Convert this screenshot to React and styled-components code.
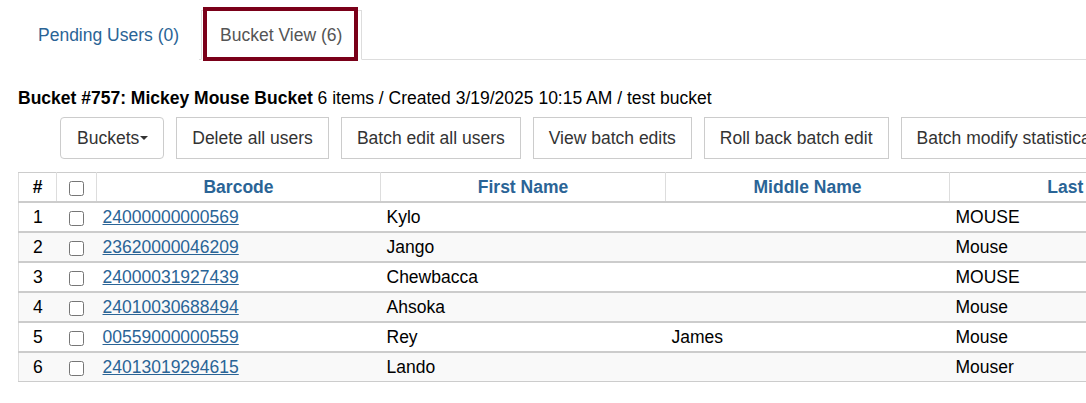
import React from "react";
import styled, { createGlobalStyle } from "styled-components";

const rows = [
  { n: 1, barcode: "24000000000569", first: "Kylo", middle: "", last: "MOUSE" },
  { n: 2, barcode: "23620000046209", first: "Jango", middle: "", last: "Mouse" },
  { n: 3, barcode: "24000031927439", first: "Chewbacca", middle: "", last: "MOUSE" },
  { n: 4, barcode: "24010030688494", first: "Ahsoka", middle: "", last: "Mouse" },
  { n: 5, barcode: "00559000000559", first: "Rey", middle: "James", last: "Mouse" },
  { n: 6, barcode: "24013019294615", first: "Lando", middle: "", last: "Mouser" },
];

const actions = [
  "Delete all users",
  "Batch edit all users",
  "View batch edits",
  "Roll back batch edit",
  "Batch modify statistical categories",
];

function App() {
  return (
    <>
      <GlobalStyle />
      <Page>
        <Tabs>
          <Tab>Pending Users (0)</Tab>
          <Tab $active>Bucket View (6)</Tab>
        </Tabs>

        <Heading>
          <strong>Bucket #757: Mickey Mouse Bucket</strong> 6 items / Created
          3/19/2025 10:15 AM / test bucket
        </Heading>

        <Toolbar>
          <DropdownButton>
            Buckets
            <Caret />
          </DropdownButton>
          {actions.map((label) => (
            <ActionButton key={label}>{label}</ActionButton>
          ))}
        </Toolbar>

        <Table>
          <colgroup>
            <col style={{ width: 38 }} />
            <col style={{ width: 40 }} />
            <col style={{ width: 284 }} />
            <col style={{ width: 285 }} />
            <col style={{ width: 284 }} />
            <col style={{ width: 284 }} />
          </colgroup>
          <thead>
            <tr>
              <HeadCell $plain>#</HeadCell>
              <HeadCell>
                <Check type="checkbox" />
              </HeadCell>
              <HeadCell>Barcode</HeadCell>
              <HeadCell>First Name</HeadCell>
              <HeadCell>Middle Name</HeadCell>
              <HeadCell>Last Name</HeadCell>
            </tr>
          </thead>
          <tbody>
            {rows.map((r) => (
              <Row key={r.n}>
                <Cell $center>{r.n}</Cell>
                <Cell $center>
                  <Check type="checkbox" />
                </Cell>
                <Cell>
                  <BarcodeLink href="#">{r.barcode}</BarcodeLink>
                </Cell>
                <Cell>{r.first}</Cell>
                <Cell>{r.middle}</Cell>
                <Cell>{r.last}</Cell>
              </Row>
            ))}
          </tbody>
        </Table>
      </Page>
    </>
  );
}

const GlobalStyle = createGlobalStyle`
  body {
    margin: 0;
    background: #fff;
    font-family: "Liberation Sans", Arial, sans-serif;
    font-size: 17.5px;
    color: #000;
    overflow: hidden;
  }
`;

const Page = styled.div`
  padding: 10px 0 0 18px;
  width: 1300px;
`;

const Tabs = styled.ul`
  display: flex;
  list-style: none;
  margin: 0;
  padding: 0;
  border-bottom: 1px solid #ddd;
`;

const Tab = styled.li`
  position: relative;
  margin: 0 2px -1px 0;
  padding: 15px 19px 15px ${(p) => (p.$active ? "18px" : "19px")};
  line-height: 18px;
  border: 1px solid ${(p) => (p.$active ? "#ddd" : "transparent")};
  border-bottom-color: transparent;
  background: #fff;
  color: ${(p) => (p.$active ? "#555" : "#2a6496")};
  cursor: pointer;

  ${(p) =>
    p.$active &&
    `
    &::after {
      content: "";
      position: absolute;
      top: -4px;
      left: 1px;
      right: 3px;
      bottom: -2px;
      border: 4px solid #7a0019;
    }
  `}
`;

const Heading = styled.div`
  margin-top: 28px;
  line-height: 20px;
`;

const Toolbar = styled.div`
  display: flex;
  gap: 12px;
  margin: 9px 0 0 42px;
`;

const ActionButton = styled.button`
  flex: none;
  height: 42px;
  padding: 0 15px;
  border: 1px solid #ccc;
  border-radius: 0;
  background: #fff;
  color: #333;
  font-family: inherit;
  font-size: 17.5px;
  white-space: nowrap;
`;

const DropdownButton = styled(ActionButton)`
  display: flex;
  align-items: center;
  padding: 0 15px 0 16px;
  border-radius: 4px;
`;

const Caret = styled.span`
  width: 0;
  height: 0;
  margin-left: 1px;
  border-top: 4px solid #333;
  border-left: 4px solid transparent;
  border-right: 4px solid transparent;
`;

const Table = styled.table`
  margin-top: 13px;
  width: 1215px;
  table-layout: fixed;
  border-collapse: collapse;
  border-left: 1px solid #ddd;
  border-top: 1px solid #ccc;
  border-bottom: 1px solid #ccc;
  font-size: 17.5px;
`;

const HeadCell = styled.th`
  padding: 4px 6px;
  line-height: 20px;
  text-align: center;
  font-weight: bold;
  color: ${(p) => (p.$plain ? "#000" : "#2a6496")};
  border-right: 1px solid #ddd;
  border-bottom: 2px solid #ccc;
`;

const Row = styled.tr`
  &:nth-child(even) {
    background: #f9f9f9;
  }
  & + & {
    border-top: 2px solid #ccc;
  }
`;

const Cell = styled.td`
  padding: 4px 6px;
  line-height: 20px;
  text-align: ${(p) => (p.$center ? "center" : "left")};
  white-space: nowrap;
  overflow: hidden;
`;

const Check = styled.input`
  width: 15px;
  height: 15px;
  margin: 0;
  vertical-align: middle;
`;

const BarcodeLink = styled.a`
  color: #2a6496;
  text-decoration: underline;
`;

export default App;
